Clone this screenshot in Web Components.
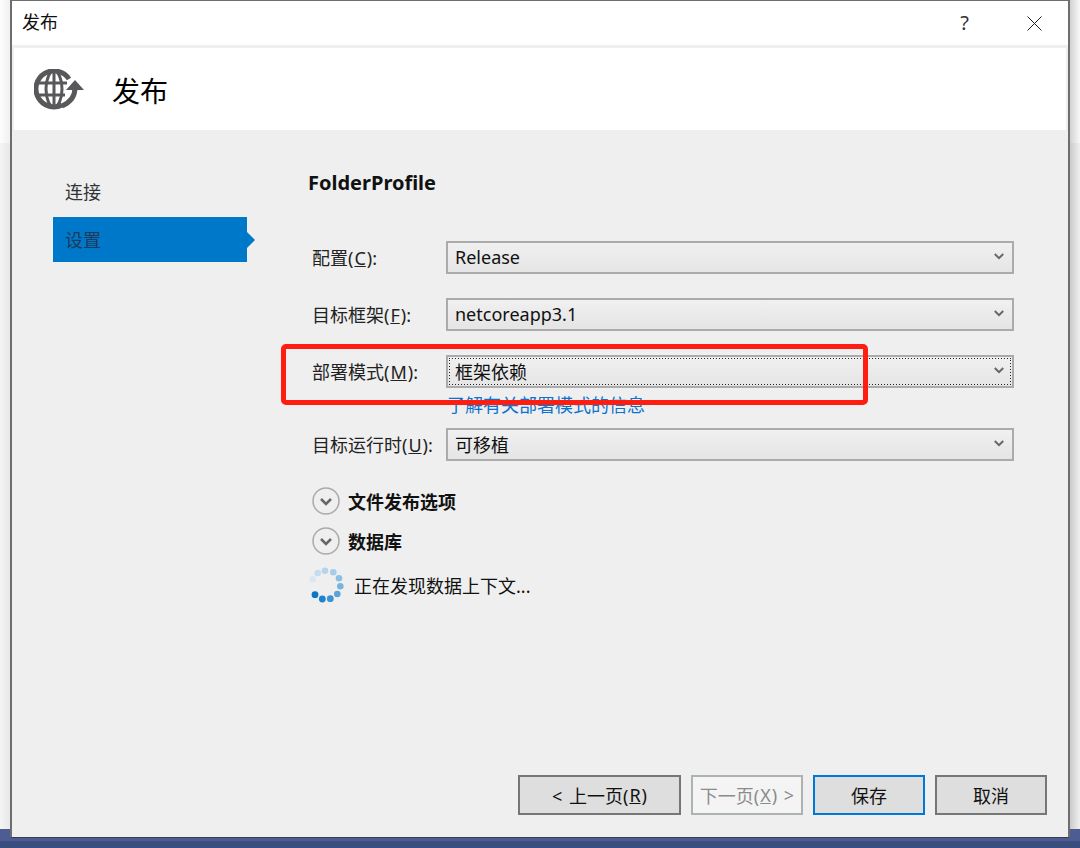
<!DOCTYPE html>
<html lang="zh">
<head>
<meta charset="utf-8">
<title>发布</title>
<style>
    html, body { margin: 0; padding: 0; }
    body {
        width: 1080px;
        height: 848px;
        overflow: hidden;
        font: 18px "Noto Sans", "Noto Sans CJK SC", sans-serif;
        color: #111;
    }
    u { margin: 0 1px; }
</style>
</head>
<body>
<publish-dialog>
    <side-nav slot="nav">
        <nav-item>连接</nav-item>
        <nav-item selected>设置</nav-item>
    </side-nav>
    <publish-form slot="form"></publish-form>
    <wizard-button slot="footer" wide>&lt; 上一页(<u>R</u>)</wizard-button>
    <wizard-button slot="footer" disabled>下一页(<u>X</u>) &gt;</wizard-button>
    <wizard-button slot="footer" primary>保存</wizard-button>
    <wizard-button slot="footer">取消</wizard-button>
</publish-dialog>

<script>
class PublishDialog extends HTMLElement {
    constructor() {
        super();
        this.attachShadow({ mode: 'open' });
    }

    connectedCallback() {
        this.shadowRoot.innerHTML = `
            <style>
                :host {
                    display: block;
                    width: 1080px;
                    height: 848px;
                    box-sizing: border-box;
                    background: linear-gradient(#4d5d94 0, #4d5d94 841px, #3a4d7f 841px);
                }
                .backdrop {
                    height: 829px;
                    padding-left: 10px;
                    background:
                        linear-gradient(90deg, transparent 0, rgba(0,0,0,.05) 10px, transparent 10px, transparent 1070px, rgba(0,0,0,.17) 1070px, rgba(0,0,0,.02) 1080px),
                        linear-gradient(#fdfdfd 143px, #f4f4f4 143px);
                }
                .window {
                    width: 1060px;
                    height: 838px;
                    box-sizing: border-box;
                    border: 1px solid #6e6e6e;
                    border-bottom-color: #3c3c46;
                    border-left-width: 2px;
                    border-right-width: 2px;
                    background: #efefef;
                    display: flex;
                    flex-direction: column;
                }
                .title {
                    height: 44px;
                    flex: none;
                    background: #fff;
                    display: flex;
                    align-items: center;
                    padding: 0 20px 0 10px;
                }
                .title .name { font-size: 18px; flex: 1; color: #111; margin-top: -4px; }
                .title .help { font-size: 20px; color: #333; margin-right: 58px; line-height: 1; }
                .title svg { display: block; margin-right: 6px; }
                .banner {
                    height: 82px;
                    flex: none;
                    margin: 3px 2px 0;
                    background: #fff;
                    display: flex;
                    align-items: center;
                    padding-left: 20px;
                    box-sizing: border-box;
                }
                .banner svg { display: block; flex: none; }
                .banner h1 {
                    font-size: 28px;
                    font-weight: 400;
                    margin: 4px 0 0 28px;
                    color: #000;
                    line-height: 1;
                }
                .main {
                    flex: 1;
                    display: flex;
                    min-height: 0;
                    padding-left: 41px;
                }
                .footer {
                    flex: none;
                    height: 62px;
                    box-sizing: border-box;
                    display: flex;
                    justify-content: flex-end;
                    gap: 10px;
                    padding: 0 21px 0 0;
                }
            </style>
            <div class="backdrop">
                <div class="window">
                    <div class="title">
                        <span class="name">发布</span>
                        <span class="help">?</span>
                        <svg width="15" height="15" viewBox="0 0 15 15"><path d="M.5.500l14 14M14.500.500l-14 14" stroke="#222" stroke-width="1" fill="none"/></svg>
                    </div>
                    <div class="banner">
                        <svg width="50" height="41" viewBox="0 0 50 41">
                            <g fill="none" stroke="#58585a">
                                <path d="M35 10A18 18 0 1 0 28 36" stroke-width="5"/>
                                <ellipse cx="20" cy="20" rx="8" ry="18" stroke-width="3"/>
                                <path d="M20 2v36M3 14h30M3 26h28" stroke-width="3"/>
                                <path d="M28 37C37 33 41 27 41 19" stroke-width="5"/>
                            </g>
                            <path d="M41 11l9 10H32z" fill="#58585a"/>
                        </svg>
                        <h1>发布</h1>
                    </div>
                    <div class="main">
                        <slot name="nav"></slot>
                        <slot name="form"></slot>
                    </div>
                    <div class="footer"><slot name="footer"></slot></div>
                </div>
            </div>
        `;
    }
}

class SideNav extends HTMLElement {
    constructor() {
        super();
        this.attachShadow({ mode: 'open' });
    }

    connectedCallback() {
        this.shadowRoot.innerHTML = `
            <style>
                :host {
                    display: block;
                    flex: none;
                    width: 256px;
                    padding-top: 39px;
                    box-sizing: border-box;
                }
            </style>
            <slot></slot>
        `;
    }
}

class NavItem extends HTMLElement {
    constructor() {
        super();
        this.attachShadow({ mode: 'open' });
    }

    connectedCallback() {
        this.shadowRoot.innerHTML = `
            <style>
                :host {
                    display: block;
                    position: relative;
                    width: 194px;
                    height: 45px;
                    margin-bottom: 3px;
                    padding-left: 12px;
                    box-sizing: border-box;
                    line-height: 47px;
                    font-size: 18px;
                    color: #333;
                }
                :host([selected]) { background: #0078c9; color: #1d3a5c; }
                :host([selected])::after {
                    content: "";
                    position: absolute;
                    left: 194px;
                    top: 15px;
                    border-left: 8px solid #0078c9;
                    border-top: 8px solid transparent;
                    border-bottom: 8px solid transparent;
                }
            </style>
            <slot></slot>
        `;
    }
}

class PublishForm extends HTMLElement {
    constructor() {
        super();
        this.attachShadow({ mode: 'open' });
    }

    connectedCallback() {
        this.shadowRoot.innerHTML = `
            <style>
                :host {
                    display: block;
                    flex: 1;
                    position: relative;
                    padding-top: 41px;
                    box-sizing: border-box;
                }
                h2 {
                    margin: 0 0 46px -1px;
                    font-size: 20px;
                    font-weight: 700;
                    line-height: 24px;
                    color: #111;
                }
                .rows { display: flex; flex-direction: column; padding-left: 3px; }
                .gap { margin-top: 24px; }
                a {
                    display: block;
                    margin: 7px 0 13px 135px;
                    font-size: 18px;
                    line-height: 20px;
                    color: #0a72d0;
                    text-decoration: none;
                }
                .highlight {
                    position: absolute;
                    left: -28px;
                    top: 214px;
                    width: 587px;
                    height: 61px;
                    box-sizing: border-box;
                    border: 5px solid #ff1d12;
                    border-radius: 5px;
                }
                .status {
                    display: flex;
                    align-items: center;
                    gap: 9px;
                    margin-top: 12px;
                    font-size: 18px;
                    color: #111;
                }
                .status svg { display: block; }
            </style>
            <h2>FolderProfile</h2>
            <div class="rows">
                <form-row label="配置(<u>C</u>):" value="Release"></form-row>
                <form-row class="gap" label="目标框架(<u>F</u>):" value="netcoreapp3.1"></form-row>
                <form-row class="gap" label="部署模式(<u>M</u>):" value="框架依赖" focused></form-row>
                <a href="#">了解有关部署模式的信息</a>
                <form-row label="目标运行时(<u>U</u>):" value="可移植"></form-row>
            </div>
            <expand-row style="margin-top:26px">文件发布选项</expand-row>
            <expand-row style="margin-top:12px">数据库</expand-row>
            <div class="status">
                <svg width="36" height="36" viewBox="0 0 36 36">
                    <circle cx="3.700" cy="12.300" r="3.300" fill="#d9e7f2"/>
                    <circle cx="8.700" cy="6" r="3.300" fill="#c3dcef"/>
                    <circle cx="16" cy="3.700" r="3.300" fill="#b5d5ec"/>
                    <circle cx="24.300" cy="5.300" r="3.300" fill="#a5cce9"/>
                    <circle cx="30" cy="11.300" r="3.300" fill="#8dbfe4"/>
                    <circle cx="31.300" cy="19.300" r="3.300" fill="#78b3df"/>
                    <circle cx="28.300" cy="27" r="3.300" fill="#5ba3d9"/>
                    <circle cx="21.300" cy="31.700" r="3.400" fill="#3d93d3"/>
                    <circle cx="13.300" cy="32" r="3.400" fill="#1d83cc"/>
                    <circle cx="6" cy="27.700" r="3.400" fill="#0a76c6"/>
                </svg>
                <span>正在发现数据上下文...</span>
            </div>
            <div class="highlight"></div>
        `;
    }
}

class FormRow extends HTMLElement {
    constructor() {
        super();
        this.attachShadow({ mode: 'open' });
    }

    connectedCallback() {
        const focused = this.hasAttribute('focused');
        this.shadowRoot.innerHTML = `
            <style>
                :host {
                    display: grid;
                    grid-template-columns: 134px 568px;
                    align-items: center;
                    height: 33px;
                    font-size: 18px;
                    color: #222;
                }
                label { white-space: nowrap; padding-bottom: 2px; }
                u { margin: 0 1px; }
                .select {
                    height: 33px;
                    box-sizing: border-box;
                    border: 2px solid #ababab;
                    background: linear-gradient(#f0f0f0, #e5e5e5);
                    display: flex;
                    align-items: center;
                    justify-content: space-between;
                    padding: 0 8px 2px 7px;
                    color: #111;
                    position: relative;
                }
                .select.focused::before {
                    content: "";
                    position: absolute;
                    inset: 1px;
                    background:
                        repeating-linear-gradient(90deg, #222 0 1px, transparent 1px 3px) top / 100% 1px no-repeat,
                        repeating-linear-gradient(90deg, #222 0 1px, transparent 1px 3px) bottom / 100% 1px no-repeat,
                        repeating-linear-gradient(0deg, #222 0 1px, transparent 1px 3px) left / 1px 100% no-repeat,
                        repeating-linear-gradient(0deg, #222 0 1px, transparent 1px 3px) right / 1px 100% no-repeat;
                }
                svg { display: block; }
            </style>
            <label>${this.getAttribute('label')}</label>
            <div class="select ${focused ? 'focused' : ''}">
                <span>${this.getAttribute('value')}</span>
                <svg width="10" height="7" viewBox="0 0 10 7"><path d="M.8 1L5 5.200 9.200 1" fill="none" stroke="#666" stroke-width="2"/></svg>
            </div>
        `;
    }
}

class ExpandRow extends HTMLElement {
    constructor() {
        super();
        this.attachShadow({ mode: 'open' });
    }

    connectedCallback() {
        this.shadowRoot.innerHTML = `
            <style>
                :host {
                    display: flex;
                    align-items: center;
                    gap: 8px;
                    height: 28px;
                    padding-left: 3px;
                    font-size: 18px;
                    font-weight: 700;
                    color: #111;
                }
                svg { display: block; flex: none; }
            </style>
            <svg width="28" height="28" viewBox="0 0 28 28">
                <circle cx="14" cy="14" r="13" fill="none" stroke="#ababab" stroke-width="1.500"/>
                <path d="M9 12l5 5 5-5" fill="none" stroke="#666" stroke-width="2.500"/>
            </svg>
            <span><slot></slot></span>
        `;
    }
}

class WizardButton extends HTMLElement {
    constructor() {
        super();
        this.attachShadow({ mode: 'open' });
    }

    connectedCallback() {
        this.shadowRoot.innerHTML = `
            <style>
                :host {
                    display: flex;
                    align-items: center;
                    justify-content: center;
                    width: 112px;
                    height: 40px;
                    box-sizing: border-box;
                    border: 2px solid #767676;
                    background: #dedede;
                    font-size: 18px;
                    word-spacing: 2px;
                    color: #111;
                    white-space: nowrap;
                }
                :host([wide]) { width: 163px; }
                :host([primary]) { border-color: #0078d7; }
                :host([disabled]) {
                    background: #f4f4f4;
                    border-color: #adb2b5;
                    color: #8b8b8b;
                }
            </style>
            <slot></slot>
        `;
    }
}

customElements.define('publish-dialog', PublishDialog);
customElements.define('side-nav', SideNav);
customElements.define('nav-item', NavItem);
customElements.define('publish-form', PublishForm);
customElements.define('form-row', FormRow);
customElements.define('expand-row', ExpandRow);
customElements.define('wizard-button', WizardButton);
</script>
</body>
</html>
